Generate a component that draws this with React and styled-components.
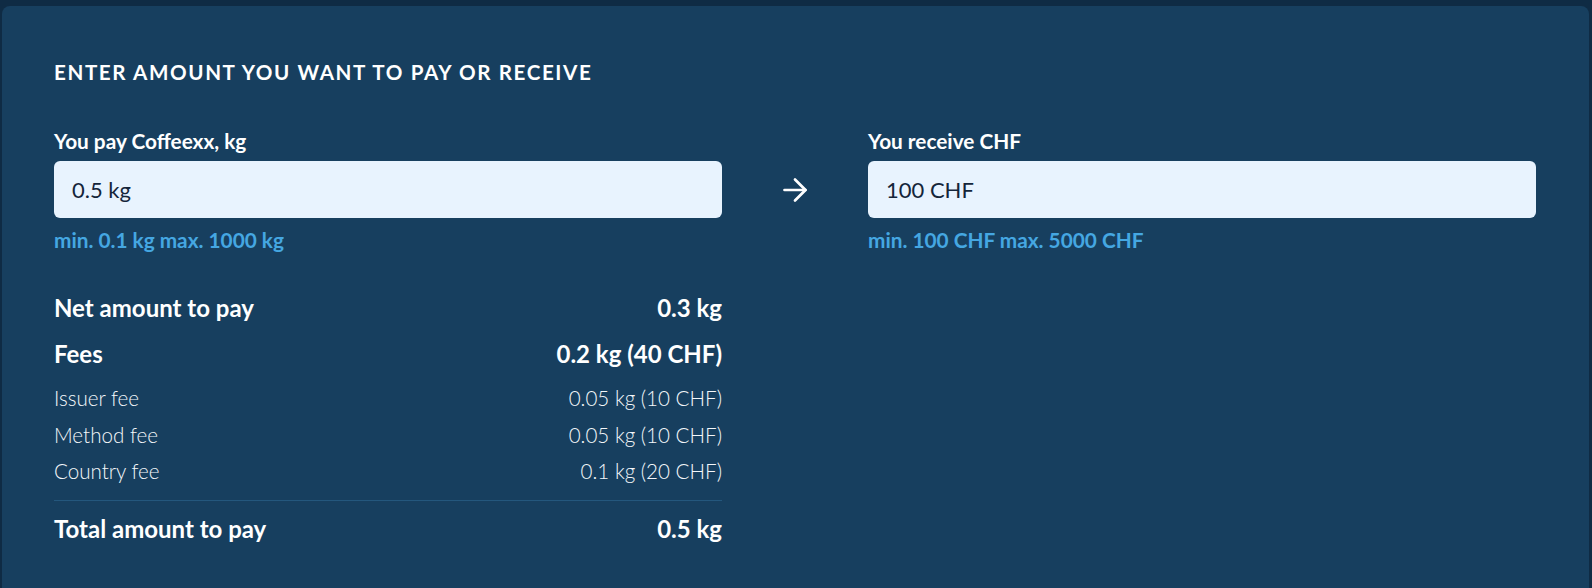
import React from "react";
import styled, { createGlobalStyle } from "styled-components";
import { ArrowRight } from "lucide-react";

const GlobalStyle = createGlobalStyle`
  html, body {
    margin: 0;
    padding: 0;
    background: #0f2b44;
    font-family: Lato, "Open Sans", sans-serif;
  }
  * {
    box-sizing: border-box;
  }
`;

const Page = styled.div`
  padding: 6px 3px 0 2px;
  height: 588px;
  overflow: hidden;
`;

const Card = styled.section`
  background: #173f5f;
  border-radius: 8px 8px 0 0;
  padding: 54px 53px 60px 52px;
  min-height: 600px;
`;

const Heading = styled.h2`
  margin: 0 0 45px 0;
  font-size: 20.6px;
  line-height: 24px;
  font-weight: 700;
  letter-spacing: 1.6px;
  color: #ffffff;
  text-transform: uppercase;
`;

const Grid = styled.div`
  display: grid;
  grid-template-columns: 1fr 146px 1fr;
  align-items: start;
`;

const Column = styled.div`
  display: flex;
  flex-direction: column;
`;

const Label = styled.label`
  font-size: 20.8px;
  line-height: 24px;
  font-weight: 700;
  color: #ffffff;
  margin-bottom: 8px;
`;

const Input = styled.div`
  height: 57px;
  background: #e8f3fe;
  border-radius: 6px;
  display: flex;
  align-items: center;
  padding: 0 18px;
  font-size: 22px;
  color: #14253a;
`;

const Hint = styled.div`
  margin-top: 10px;
  font-size: 20.8px;
  line-height: 24px;
  font-weight: 700;
  color: #45a7e2;
`;

const ArrowCell = styled.div`
  height: 57px;
  margin-top: 32px;
  display: flex;
  align-items: center;
  justify-content: center;
  color: #ffffff;
`;

const Summary = styled.div`
  margin-top: 33px;
  display: flex;
  flex-direction: column;
`;

const Row = styled.div`
  display: flex;
  justify-content: space-between;
  line-height: ${(p) => (p.$strong ? "46px" : "36.5px")};
  font-size: ${(p) => (p.$strong ? "24px" : "20.6px")};
  font-weight: ${(p) => (p.$strong ? 700 : 300)};
  color: ${(p) => (p.$strong ? "#ffffff" : "#f4f7fa")};
  margin-bottom: ${(p) => (p.$gap ? p.$gap : 0)}px;
`;

const Divider = styled.hr`
  border: none;
  border-top: 1px solid #24577d;
  margin: 10px 0 5px;
`;

const rows = [
  { label: "Net amount to pay", value: "0.3 kg", strong: true },
  { label: "Fees", value: "0.2 kg (40 CHF)", strong: true, gap: 3 },
  { label: "Issuer fee", value: "0.05 kg (10 CHF)" },
  { label: "Method fee", value: "0.05 kg (10 CHF)" },
  { label: "Country fee", value: "0.1 kg (20 CHF)" },
];

export default function App() {
  return (
    <>
      <GlobalStyle />
      <Page>
        <Card>
          <Heading>Enter amount you want to pay or receive</Heading>
          <Grid>
            <Column>
              <Label>You pay Coffeexx, kg</Label>
              <Input>0.5 kg</Input>
              <Hint>min. 0.1 kg max. 1000 kg</Hint>
              <Summary>
                {rows.map((r) => (
                  <Row key={r.label} $strong={r.strong} $gap={r.gap}>
                    <span>{r.label}</span>
                    <span>{r.value}</span>
                  </Row>
                ))}
                <Divider />
                <Row $strong>
                  <span>Total amount to pay</span>
                  <span>0.5 kg</span>
                </Row>
              </Summary>
            </Column>
            <ArrowCell>
              <ArrowRight size={36} strokeWidth={1.8} />
            </ArrowCell>
            <Column>
              <Label>You receive CHF</Label>
              <Input>100 CHF</Input>
              <Hint>min. 100 CHF max. 5000 CHF</Hint>
            </Column>
          </Grid>
        </Card>
      </Page>
    </>
  );
}
